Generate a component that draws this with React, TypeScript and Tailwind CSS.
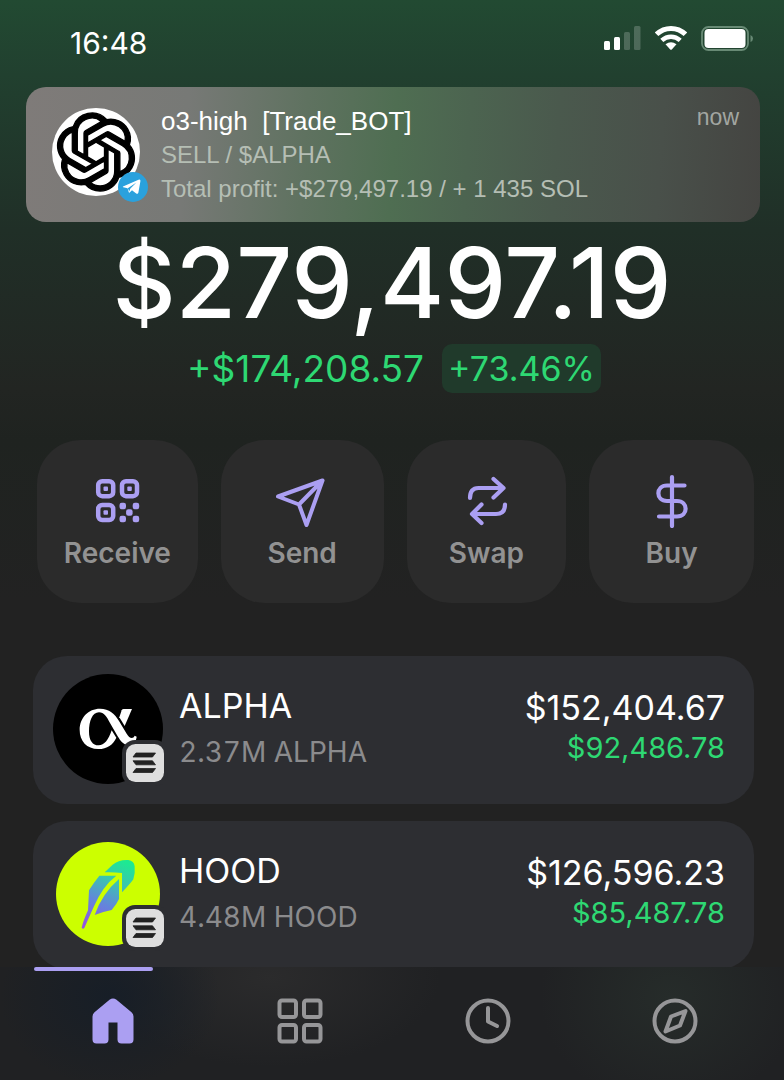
import React from "react";
import { SiOpenai } from "react-icons/si";

function StatusBar() {
  return (
    <header className="flex h-[87px] items-start justify-between pl-[70px] pr-[31px] text-white">
      <time className="pt-[25px] text-[30px] leading-9">16:48</time>
      <div className="flex items-center gap-[14px] pt-[25px]">
        <svg width="37" height="26" viewBox="0 0 37 26" fill="white" aria-label="Signal">
          <rect x="0" y="16" width="6" height="9" rx="1.5" />
          <rect x="10" y="12" width="6" height="13" rx="1.5" />
          <rect x="20" y="7" width="6" height="18" rx="1.5" opacity=".2" />
          <rect x="30" y="1" width="6.500" height="24" rx="1.5" opacity=".2" />
        </svg>
        <svg width="32" height="26" viewBox="0 0 32 26" fill="none" stroke="white" aria-label="Wi-Fi">
          <path d="M1.600 9.300C9.700 1.500 22.300 1.500 30.400 9.300" strokeWidth="5" />
          <path d="M6.800 15.300C12.200 10.400 19.800 10.400 25.200 15.300" strokeWidth="4.500" />
          <path d="M10.500 19.300Q16 15.200 21.500 19.300L17 24.300Q16 25.300 15 24.300Z" fill="white" stroke="none" />
        </svg>
        <svg width="52" height="26" viewBox="0 0 52 26" aria-label="Battery">
          <rect x="1" y="2" width="46" height="23" rx="6.500" fill="none" stroke="#688a75" strokeWidth="1.800" />
          <rect x="3.500" y="4" width="41" height="19" rx="4" fill="white" />
          <path d="M49.500 10Q52 11 52 13.500T49.500 17Z" fill="#688a75" />
        </svg>
      </div>
    </header>
  );
}

function Notification() {
  return (
    <section className="ml-[26px] mr-6 flex h-[135px] items-start rounded-[20px] bg-[linear-gradient(94deg,#7f7b79_0%,#777976_22%,#5f7260_38%,#4f6e52_50%,#4c6450_60%,#4a594d_72%,#49504a_86%,#444441_100%)] pl-[26px] pr-[21px] font-['Liberation_Sans',Arial,sans-serif]">
      <div className="relative mt-[21px] flex size-[88px] shrink-0 items-center justify-center rounded-full bg-white">
        <SiOpenai size={78} color="black" stroke="black" strokeWidth="0.4" overflow="visible" />
        <svg className="absolute -bottom-[6px] -right-2" width="30" height="30" viewBox="0 0 30 30">
          <circle cx="15" cy="15" r="15" fill="#2aa1dd" />
          <path d="M5 14.500L20.500 7.800Q22.800 7 22.400 9.300L20.400 20.500Q20 22.600 18.200 21.400L14 18.300L11.600 20.600Q10.900 21.100 10.700 20.100L9.600 16.200L5.200 15.200Q4.500 14.900 5 14.500Z" fill="white" />
          <path d="M9.800 16.200L18.400 10.500L12.200 16.700L11.300 19.600Z" fill="#2aa1dd" />
        </svg>
      </div>
      <div className="ml-[21px] min-w-0 flex-1 pt-[17px] text-2xl text-[#b5beb4]">
        <h2 className="whitespace-pre text-[26px] leading-[34px] text-white">o3-high  [Trade_BOT]</h2>
        <p className="leading-[34px]">SELL / $ALPHA</p>
        <p className="whitespace-nowrap leading-[34px]">Total profit: +$279,497.19 / + 1 435 SOL</p>
      </div>
      <span className="pt-4 text-[23px] leading-7 text-[#a2a6a1]">now</span>
    </section>
  );
}

const actions: { label: string; icon: React.ReactNode }[] = [
  {
    label: "Receive",
    icon: (
      <>
        <g strokeWidth="4.500">
          <rect x="8.200" y="7.200" width="15" height="15" rx="4" />
          <rect x="32" y="7.200" width="15" height="15" rx="4" />
          <rect x="8.200" y="31" width="15" height="15" rx="4" />
        </g>
        <g fill="#ab9ff2" stroke="none">
          <rect x="13.500" y="12.500" width="4.500" height="4.500" rx="1" />
          <rect x="37.300" y="12.500" width="4.500" height="4.500" rx="1" />
          <rect x="13.500" y="36.300" width="4.500" height="4.500" rx="1" />
          <rect x="29.500" y="28.800" width="6.500" height="6.500" rx="2.200" />
          <rect x="42.700" y="28.800" width="6.500" height="6.500" rx="2.200" />
          <rect x="36.100" y="35.300" width="6.500" height="6.500" rx="2.200" />
          <rect x="29.500" y="41.800" width="6.500" height="6.500" rx="2.200" />
          <rect x="42.700" y="41.800" width="6.500" height="6.500" rx="2.200" />
        </g>
      </>
    ),
  },
  {
    label: "Send",
    icon: <path d="M3 22.500L47.500 6.500L31.500 51L24 30.500ZM24 30.500L47.500 6.500" strokeWidth="4" />,
  },
  {
    label: "Swap",
    icon: (
      <path d="M11 24C11 17.500 13.500 14 19.500 14H44.500M34.500 5L44.500 14L34.500 23.500M46 30.500C46 37 43 40 37 40H13M22.500 30.500L13 40L22.500 49" strokeWidth="4.200" />
    ),
  },
  {
    label: "Buy",
    icon: (
      <path d="M27 3V52M39.500 11.500H22C10.500 11.500 10.500 27 22 27H32C43.500 27 43.500 42.500 32 42.500H14" strokeWidth="4.200" />
    ),
  },
];

function Actions() {
  return (
    <div className="mt-[47px] grid grid-cols-[161fr_163fr_160fr_165fr] gap-[23px] pl-[37px] pr-[30px]">
      {actions.map((a) => (
        <button
          key={a.label}
          type="button"
          className="flex h-[163px] flex-col items-center rounded-[44px] bg-[#2b2b2b] pt-[34px] text-[28px] font-semibold leading-9 text-[#929292]"
        >
          <svg width="54" height="54" viewBox="0 0 54 54" fill="none" stroke="#ab9ff2" strokeLinecap="round" strokeLinejoin="round" aria-hidden="true">
            {a.icon}
          </svg>
          <span className="mt-[7px]">{a.label}</span>
        </button>
      ))}
    </div>
  );
}

function SolanaBadge() {
  return (
    <svg className="absolute -bottom-[2px] -right-[5px]" width="46" height="46" viewBox="0 0 46 46" aria-hidden="true">
      <rect width="46" height="46" rx="13" fill="#2d2e32" />
      <rect x="4" y="4" width="38" height="38" rx="9.500" fill="#dedede" />
      <path
        d="M14 13H33.500L30.500 17H11ZM11 20.800H30.500L33.500 24.800H14ZM14 28.500H33.500L30.500 32.500H11Z"
        fill="#222"
        stroke="#222"
        strokeWidth=".8"
        strokeLinejoin="round"
      />
    </svg>
  );
}

function AlphaLogo() {
  return (
    <svg width="110" height="110" viewBox="99 87 330 330" aria-hidden="true">
      <circle cx="264" cy="252" r="165" fill="#000" />
      <g fill="#fff">
        <path d="M305 196Q307 192 311 192H336L314 243L298 217Z" />
        <path d="M240 191C268 191 284 206 297 228L320 266C328 280 339 283 344 272L350 275C348 292 338 300 324 300C310 300 301 287 293 274L270 234C260 215 252 202 237 202C217 202 207 228 207 260C207 286 218 301 236 301C253 301 265 285 275 256L289 278C279 299 262 312 235 312C200 312 179 288 179 255C179 218 205 191 240 191Z" />
      </g>
    </svg>
  );
}

function HoodLogo() {
  return (
    <svg width="104" height="104" viewBox="108 93 312 312" aria-hidden="true">
      <defs>
        <linearGradient id="feather" gradientUnits="userSpaceOnUse" x1="300" y1="147" x2="215" y2="350">
          <stop offset="0" stopColor="#1de992" />
          <stop offset=".3" stopColor="#3bc4b0" />
          <stop offset=".65" stopColor="#6484dc" />
          <stop offset="1" stopColor="#9355e0" />
        </linearGradient>
      </defs>
      <circle cx="264" cy="249" r="156" fill="#cf0" />
      <g fill="url(#feather)">
        <path d="M254 184L278 161Q297 145 325 147Q342 149 344 166Q346 188 340 205Q333 216 306 244V186Q280 183 254 184Z" />
        <path d="M238 194H289Q248 225 222 286Q207 319 193 351Q189 356 185 350Q190 329 204 298L207 238Q221 215 238 194Z" />
        <path d="M297 204V264Q290 280 275 297Q251 301 224 312Q247 247 297 204Z" />
      </g>
    </svg>
  );
}

const tokens = [
  { name: "ALPHA", amount: "2.37M ALPHA", value: "$152,404.67", gain: "$92,486.78", logo: <AlphaLogo /> },
  { name: "HOOD", amount: "4.48M HOOD", value: "$126,596.23", gain: "$85,487.78", logo: <HoodLogo /> },
];

function TokenList() {
  return (
    <ul className="mt-[53px] flex flex-col gap-[17px] pl-[33px] pr-[30px]">
      {tokens.map((t) => (
        <li key={t.name} className="flex h-[148px] items-center rounded-[34px] bg-[#2d2e32] pl-5 pr-[29px]">
          <div className="relative mb-[2px] flex size-[110px] shrink-0 items-center justify-center">
            {t.logo}
            <SolanaBadge />
          </div>
          <div className="ml-4 flex-1">
            <h3 className="text-[34px] leading-[44px] text-white">{t.name}</h3>
            <p className="text-[28px] tabular-nums leading-[48px] text-[#8b8b8d]">{t.amount}</p>
          </div>
          <div className="pb-1 text-right leading-10">
            <p className="text-[34px] text-white">{t.value}</p>
            <p className="text-[29px] text-[#2ed873]">{t.gain}</p>
          </div>
        </li>
      ))}
    </ul>
  );
}

const tabs: { label: string; icon: React.ReactNode }[] = [
  {
    label: "Home",
    icon: (
      <path
        d="M2.500 18.500Q2.500 16 4.500 14.300L19.500 1.700Q23 -.5 26.500 1.700L41.500 14.300Q43.500 16 43.500 18.500V41.500Q43.500 45.500 39.500 45.500H31.500Q27.500 45.500 27.500 41.500V24.500H18.500V41.500Q18.500 45.500 14.500 45.500H6.500Q2.500 45.500 2.500 41.500Z"
        fill="#ab9ff2"
        stroke="none"
      />
    ),
  },
  {
    label: "Apps",
    icon: (
      <>
        <rect x="2.500" y="2.500" width="16.500" height="16.500" rx="2.500" />
        <rect x="27" y="2.500" width="16.500" height="16.500" rx="2.500" />
        <rect x="2.500" y="27" width="16.500" height="16.500" rx="2.500" />
        <rect x="27" y="27" width="16.500" height="16.500" rx="2.500" />
      </>
    ),
  },
  {
    label: "Activity",
    icon: (
      <>
        <circle cx="23" cy="23" r="20.500" />
        <path d="M23 10V23.500L32 28" />
      </>
    ),
  },
  {
    label: "Explore",
    icon: (
      <>
        <circle cx="23" cy="23" r="20.500" />
        <path d="M33.500 13L28 27.500L13.500 33.500L19 18.500Z" />
      </>
    ),
  },
];

function TabBar() {
  return (
    <nav className="relative -mt-[2px] grid flex-1 grid-cols-4 items-start bg-[#202123] bg-[radial-gradient(110px_90px_at_110px_30px,#171e27_0%,#171e2700_100%),radial-gradient(170px_90px_at_270px_10px,#2b2b2c_0%,#2b2b2c00_100%),radial-gradient(130px_110px_at_670px_30px,#262c2a_0%,#262c2a00_100%)] pb-9 pl-[19px] pr-[15px] pt-[31px]">
      <span className="absolute left-[34px] top-0 h-1 w-[119px] rounded-sm bg-[#ab9ff2]" />
      {tabs.map((t) => (
        <a key={t.label} href="#" aria-label={t.label} className="flex justify-center">
          <svg width="46" height="46" viewBox="0 0 46 46" fill="none" stroke="#969698" strokeWidth="4" strokeLinecap="round" strokeLinejoin="round" aria-hidden="true">
            {t.icon}
          </svg>
        </a>
      ))}
    </nav>
  );
}

export default function App() {
  return (
    <div className="flex min-h-screen flex-col bg-[linear-gradient(180deg,#224a32_0px,#21402f_75px,#202f27_230px,#222522_390px,#1f2320_440px,#222222_600px)] font-[Inter,sans-serif]">
      <StatusBar />
      <Notification />
      <main>
        <div className="mt-[13px] text-center">
          <h1 className="text-[98px] font-medium leading-[96px] text-white">$279,497.19</h1>
          <div className="mt-[13px] flex items-center justify-center gap-[18px] pl-1 text-[#2ed873]">
            <span className="text-[37px] leading-[49px]">+$174,208.57</span>
            <span className="rounded-[10px] bg-[#203a2b] px-[6px] text-[34px] leading-[49px]">+73.46%</span>
          </div>
        </div>
        <Actions />
        <TokenList />
      </main>
      <TabBar />
    </div>
  );
}
